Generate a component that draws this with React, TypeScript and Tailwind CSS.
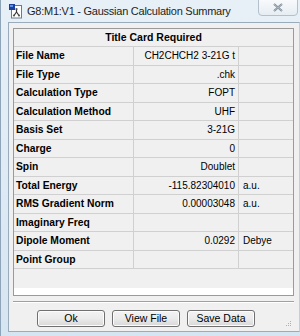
import React from "react";

const rows: [string, string, string][] = [
  ["File Name", "CH2CHCH2 3-21G t", ""],
  ["File Type", ".chk", ""],
  ["Calculation Type", "FOPT", ""],
  ["Calculation Method", "UHF", ""],
  ["Basis Set", "3-21G", ""],
  ["Charge", "0", ""],
  ["Spin", "Doublet", ""],
  ["Total Energy", "-115.82304010", "a.u."],
  ["RMS Gradient Norm", "0.00003048", "a.u."],
  ["Imaginary Freq", "", ""],
  ["Dipole Moment", "0.0292", "Debye"],
  ["Point Group", "", ""],
];

function AppIcon() {
  return (
    <svg width="14" height="15" viewBox="0 0 14 15">
      <rect x="2.5" y="1.5" width="10" height="12.5" fill="#fff" stroke="#6b7a8c" />
      <rect x="0" y="0" width="6" height="6" fill="#1d3f9e" />
      <rect x="1" y="1" width="3" height="2" fill="#5b8ee6" />
      <path d="M7.5 5 L7.5 8 M7.5 8 L5 11.5 M7.5 8 L10 11.5" stroke="#333" strokeWidth="1.2" fill="none" />
      <circle cx="7.5" cy="5" r="1.1" fill="#555" />
      <circle cx="5" cy="11.5" r="1.1" fill="#555" />
      <circle cx="10" cy="11.5" r="1.1" fill="#555" />
    </svg>
  );
}

function Btn({ label }: { label: string }) {
  return (
    <div className="w-[68px] h-[17px] rounded-[3px] border border-[#707070] bg-gradient-to-b from-[#f3f3f3] via-[#ebebeb] to-[#d8d8d8] flex items-center justify-center text-[10.5px] text-black shadow-[inset_0_0_0_1px_#fcfcfc]">
      {label}
    </div>
  );
}

export default function App() {
  return (
    <div
      className="w-[300px] h-[336px] relative overflow-hidden bg-gradient-to-b from-[#e8f0f7] to-[#d6e5f2]"
      style={{ fontFamily: '"Liberation Sans", Arial, sans-serif' }}
    >
      {/* left frame edge */}
      <div className="absolute left-0 top-0 bottom-0 w-[1px] bg-[#8ea4b8]" />
      {/* title bar */}
      <div className="h-[22px] flex items-center pl-[9px]">
        <AppIcon />
        <span className="ml-[4px] text-[11px] tracking-[-0.25px] text-[#1e1e1e]">
          G8:M1:V1 - Gaussian Calculation Summary
        </span>
      </div>
      {/* close button */}
      <div className="absolute left-[258px] top-[-1px] w-[40px] h-[17px] rounded-b-[4px] border border-[#b4c0cc] bg-gradient-to-b from-[#f8fafc] to-[#e6edf3] flex items-center justify-center">
        <svg width="10" height="9" viewBox="0 0 10 9">
          <path d="M1 1 L9 8 M9 1 L1 8" stroke="#7c8792" strokeWidth="2" />
          <path d="M1 1 L9 8 M9 1 L1 8" stroke="#c9d0d7" strokeWidth="0.7" />
        </svg>
      </div>
      {/* client area */}
      <div className="ml-[8px] w-[292px] h-[310px] bg-[#f0f0f0] border border-[#9aabbb] border-r-[#c3ced8] flex flex-col px-[4px] pt-[5px] relative">
        {/* grid */}
        <div className="w-[281px] h-[268px] border border-[#9a9a9a] bg-white flex flex-col">
          <div className="h-[18px] shrink-0 bg-[#f0f0f0] border-b border-[#d0d0d0] flex items-center justify-center text-[10.5px] font-bold text-black">
            Title Card Required
          </div>
          {rows.map(([label, value, unit]) => (
            <div key={label} className="h-[18.53px] shrink-0 bg-[#f0f0f0] border-b border-[#d0d0d0] flex text-[10px] text-black">
              <div className="w-[120px] shrink-0 border-r border-[#d0d0d0] flex items-center pl-[2px] font-bold text-[10.3px]">
                {label}
              </div>
              <div className="w-[105px] shrink-0 border-r border-[#d0d0d0] flex items-center justify-end pr-[3px]">
                {value}
              </div>
              <div className="flex-1 flex items-center pl-[4px]">{unit}</div>
            </div>
          ))}
          <div className="h-[19px] shrink-0 bg-[#f0f0f0]" />
          <div className="flex-1 bg-white" />
        </div>
        {/* separator */}
        <div className="mt-[5px] w-[281px] h-[2px] border-t border-[#a0a0a0] border-b border-b-white" />
        {/* buttons */}
        <div className="mt-[7px] flex gap-[7px] pl-[24px]">
          <Btn label="Ok" />
          <Btn label="View File" />
          <Btn label="Save Data" />
        </div>
        {/* grip */}
        <svg className="absolute right-[7px] bottom-[4px]" width="6" height="6" viewBox="0 0 6 6">
          <rect x="4" y="0" width="1" height="1" fill="#b0b0b0" />
          <rect x="2" y="2" width="1" height="1" fill="#b0b0b0" />
          <rect x="4" y="2" width="1" height="1" fill="#b0b0b0" />
          <rect x="0" y="4" width="1" height="1" fill="#b0b0b0" />
          <rect x="2" y="4" width="1" height="1" fill="#b0b0b0" />
          <rect x="4" y="4" width="1" height="1" fill="#b0b0b0" />
        </svg>
      </div>
    </div>
  );
}
